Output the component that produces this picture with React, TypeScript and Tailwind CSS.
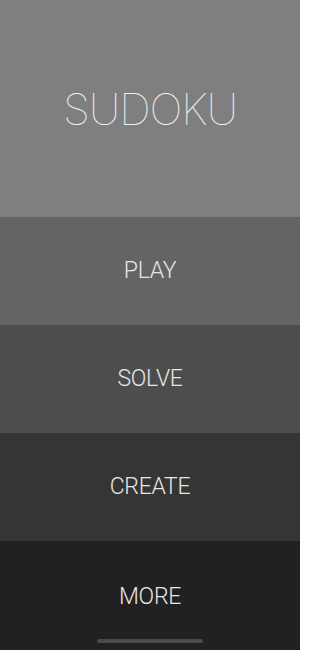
import React from 'react';

const items = [
  { label: 'PLAY', bg: 'bg-[#646464]' },
  { label: 'SOLVE', bg: 'bg-[#4d4d4d]' },
  { label: 'CREATE', bg: 'bg-[#353535]' },
];

export default function App() {
  return (
    <div className="relative flex h-[650px] w-[300px] flex-col overflow-hidden font-['Roboto',sans-serif] text-[#e6e6e6]">
      {/* Title */}
      <div className="flex h-[217px] items-center justify-center bg-[#7f7f7f]">
        <h1 className="font-['Inter',sans-serif] text-[44px] font-thin tracking-tight text-[#f0f0f0]">SUDOKU</h1>
      </div>

      {items.map((item) => (
        <button
          key={item.label}
          className={`flex h-[108px] items-center justify-center ${item.bg} text-[23px] font-light tracking-[-0.3px]`}
        >
          {item.label}
        </button>
      ))}

      <button className="flex flex-1 items-center justify-center bg-[#212121] pt-[4px] text-[23px] font-light tracking-[-0.3px]">
        MORE
      </button>

      {/* Home indicator */}
      <div className="absolute bottom-[7px] left-1/2 h-[4px] w-[106px] -translate-x-1/2 rounded-full bg-[#4a4a4a]" />
    </div>
  );
}
